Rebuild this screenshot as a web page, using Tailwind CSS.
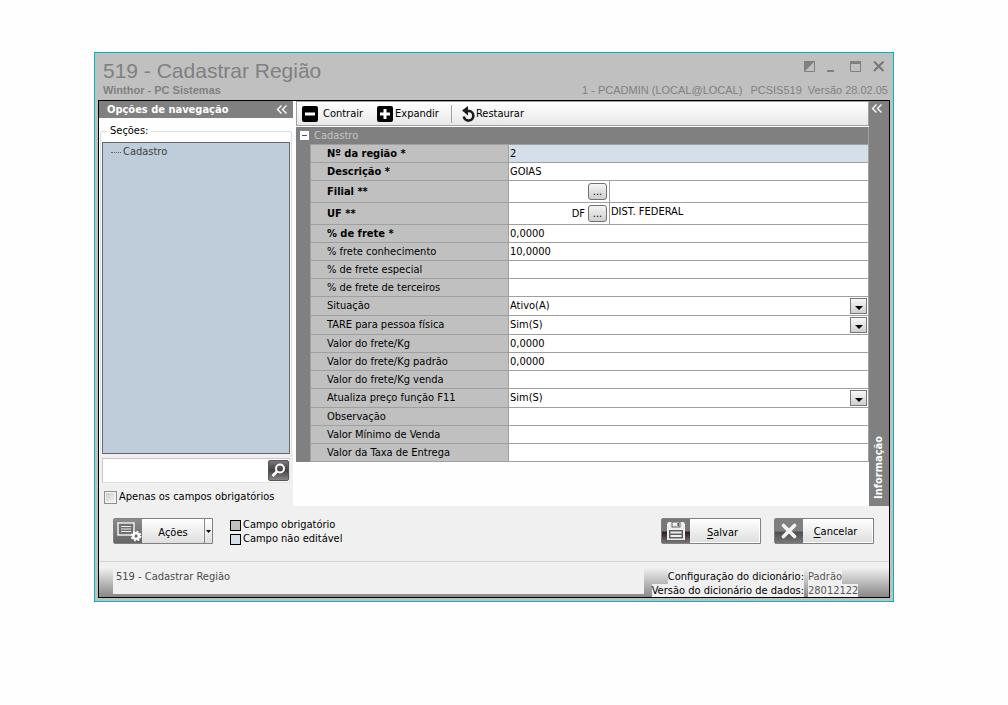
<!DOCTYPE html>
<html lang="pt-BR">
<head>
<meta charset="utf-8">
<title>519 - Cadastrar Região</title>
<script src="https://cdn.jsdelivr.net/npm/@tailwindcss/browser@4"></script>
</head>
<body class="flex min-h-screen flex-col bg-[#fefefe] pt-[52px] pr-[114px] pb-[103px] pl-[94px] font-['DejaVu_Sans_Condensed','Noto_Sans',sans-serif] text-[11px] leading-[14px] text-black">
<div class="flex grow flex-col border border-[#00b4c4] bg-[#c0c0c0] pr-[3px] pb-[3px] pl-[3px]">
  <header class="flex h-[47px] justify-between pl-[5px] font-['Liberation_Sans',sans-serif] text-[#808080]">
    <div class="flex flex-col pt-[6px]">
      <h1 class="text-[21px] leading-6">519 - Cadastrar Região</h1>
      <p class="text-[11px] leading-[14px] font-bold">Winthor - PC Sistemas</p>
    </div>
    <div class="flex flex-col items-end justify-between pt-[7px] pr-[2px] pb-[3px]">
      <div class="flex gap-[11px] pr-[3px]">
        <button aria-label="Alternar" class="h-3 w-3"><svg viewBox="0 0 12 12" class="h-3 w-3"><path d="M.5 1.500h10v10H.5z" fill="none" stroke="#808080"/><path d="M0 1h11L0 12z" fill="#808080"/></svg></button>
        <button aria-label="Minimizar" class="h-3 w-3"><svg viewBox="0 0 12 12" class="h-3 w-3"><path d="M0 10h7v2H0z" fill="#808080"/></svg></button>
        <button aria-label="Maximizar" class="h-3 w-3"><svg viewBox="0 0 12 12" class="h-3 w-3"><path d="M.5 1.500h10v10H.5z" fill="none" stroke="#808080"/><path d="M0 1h11v3H0z" fill="#808080"/></svg></button>
        <button aria-label="Fechar" class="h-3 w-3"><svg viewBox="0 0 12 12" class="h-3 w-3"><path d="M1 1.500l9.500 9.500M10.500 1.500L1 11" stroke="#777" stroke-width="2"/></svg></button>
      </div>
      <p class="flex gap-2 text-[11px] leading-[14px]"><span>1 - PCADMIN (LOCAL@LOCAL)</span><span>PCSIS519&nbsp; Versão 28.02.05</span></p>
    </div>
  </header>

  <div class="flex grow flex-col border border-black bg-[#f0f0f0]">
    <main class="flex bg-[#fefefe]">
      <aside class="flex w-[194px] shrink-0 flex-col">
        <div class="flex h-[17px] items-center justify-between bg-[#808080] pr-[5px] pl-2 text-white">
          <h2 class="font-bold">Opções de navegação</h2>
          <button aria-label="Recolher navegação"><svg viewBox="0 0 12 10" class="h-[10px] w-3"><path d="M5.500.5L1.500 4.500l4 4M10.500.5l-4 4 4 4" fill="none" stroke="#fff" stroke-width="1.300"/></svg></button>
        </div>
        <div class="flex grow flex-col px-px pt-[6px]">
          <fieldset class="flex grow flex-col rounded-t-[3px] border border-b-0 border-[#d5dfe5] px-px pt-1">
            <legend class="ml-[5px] px-[3px]">Seções:</legend>
            <div class="min-h-[312px] grow border border-[#64686e] bg-[#bfcddb] pt-[2px] pl-2">
              <a href="#cadastro" class="flex items-center gap-[2px] text-[#404040]"><span class="w-[10px] border-t border-dotted border-[#606060]"></span>Cadastro</a>
            </div>
          </fieldset>
        </div>
        <div class="bg-[#f0f0f0] px-[3px] pt-1">
          <div class="flex h-[25px] items-center border border-[#e2e2e2] border-t-[#c8c8c8] border-l-[#c8c8c8] bg-white">
            <input aria-label="Pesquisar campo" class="h-full min-w-0 grow px-1 outline-none">
            <button aria-label="Pesquisar" class="h-[21px] w-[21px] rounded-[2px] border border-[#555] bg-linear-to-b from-[#777] via-[#4a4242] to-[#888] p-px"><svg viewBox="0 0 17 17" class="h-[17px] w-[17px]"><circle cx="10" cy="6.500" r="4" fill="none" stroke="#fff" stroke-width="2"/><path d="M7 9.500L2.500 14" stroke="#fff" stroke-width="2.600"/></svg></button>
          </div>
          <div class="flex h-[23px] items-center gap-[2px] pt-[7px] pb-[2px] pl-[2px]">
            <input id="obrig" type="checkbox" class="h-[13px] w-[13px] appearance-none border border-[#8e8f8f] bg-linear-to-br from-[#c8c8c8] to-[#fafafa] shadow-[inset_0_0_0_1px_#f4f4f4] checked:bg-[#555]">
            <label for="obrig" class="whitespace-nowrap">Apenas os campos obrigatórios</label>
          </div>
        </div>
      </aside>

      <section class="ml-[3px] min-w-0 grow">
        <div class="flex h-[25px] items-center border border-[#a0a0a0] bg-linear-to-b from-white to-[#e8e8e8] pt-px pl-[5px]">
          <button class="flex items-center gap-[5px]"><svg viewBox="0 0 16 16" class="h-4 w-4"><rect width="16" height="16" rx="2"/><path d="M3 6.500h10v3H3z" fill="#fff"/></svg>Contrair</button>
          <button class="ml-[14px] flex items-center gap-[2px]"><svg viewBox="0 0 16 16" class="h-4 w-4"><rect width="16" height="16" rx="2"/><path d="M3 6.500h3.500V3h3v3.500H13v3H9.500V13h-3V9.500H3z" fill="#fff"/></svg>Expandir</button>
          <span class="mr-[9px] ml-3 h-[18px] border-l border-[#a0a0a0]"></span>
          <button class="flex items-center"><svg viewBox="0 0 15 16" class="h-4 w-[15px]"><path d="M5.500 5h2.500a4.800 4.800 0 1 1-5.200 5.500" fill="none" stroke="#1c1c1c" stroke-width="2.600"/><path d="M7 0v9.500L1 4.500z" fill="#1c1c1c"/></svg>Restaurar</button>
        </div>

        <div class="mt-px border-r border-[#a0a0a0] bg-[#808080]">
          <h2 id="cadastro" class="flex h-[17px] items-center gap-[5px] pl-1 text-[#c4c4c4]"><button aria-label="Recolher Cadastro" class="h-[9px] w-[9px] border border-white bg-white"><span class="mx-auto block w-[5px] border-t border-[#235a9a]"></span></button>Cadastro</h2>
          <div class="pl-[14px]">
            <table class="w-full table-fixed border-collapse [&_input]:block [&_input]:w-full [&_input]:bg-transparent [&_input]:outline-none [&_select]:w-full [&_select]:appearance-none [&_select]:outline-none [&_td]:border-t [&_td]:border-l [&_td]:border-[#a0a0a0] [&_td]:bg-white [&_td]:p-0 [&_td]:pl-px [&_th]:border-t [&_th]:border-l [&_th]:border-[#a0a0a0] [&_th]:bg-[#c0c0c0] [&_th]:p-0 [&_th]:pl-4 [&_th]:text-left">
              <colgroup><col class="w-[198px]"><col></colgroup>
              <tbody class="border-b border-[#a0a0a0]">
                <tr class="h-[18px]"><th><label for="f1">Nº da região *</label></th><td class="!bg-[#d5dfea]"><input id="f1" value="2" readonly></td></tr>
                <tr class="h-[18px]"><th><label for="f2">Descrição *</label></th><td><input id="f2" value="GOIAS"></td></tr>
                <tr class="h-[22px]"><th><label for="f3">Filial **</label></th><td>
                  <div class="flex h-[21px] items-center"><div class="w-[77px] pr-[2px]"><input id="f3"></div><button aria-label="Procurar filial" class="ml-px flex h-[17px] w-[19px] shrink-0 items-end justify-center rounded-[3px] border border-[#707070] bg-linear-to-b from-[#f4f4f4] to-[#cfcfcf] leading-[14px]">...</button><div class="ml-[2px] h-full grow border-l border-[#a0a0a0]"></div></div></td></tr>
                <tr class="h-[22px]"><th><label for="f4">UF **</label></th><td>
                  <div class="flex h-[21px] items-center"><div class="w-[77px] pr-[2px]"><input id="f4" value="DF" class="text-right"></div><button aria-label="Procurar UF" class="ml-px flex h-[17px] w-[19px] shrink-0 items-end justify-center rounded-[3px] border border-[#707070] bg-linear-to-b from-[#f4f4f4] to-[#cfcfcf] leading-[14px]">...</button><div class="ml-[2px] h-full grow border-l border-[#a0a0a0] pt-[2px] pl-px">DIST. FEDERAL</div></div></td></tr>
                <tr class="h-[18px]"><th><label for="f5">% de frete *</label></th><td><input id="f5" value="0,0000"></td></tr>
                <tr class="h-[18px]"><th class="font-normal"><label for="f6">% frete conhecimento</label></th><td><input id="f6" value="10,0000"></td></tr>
                <tr class="h-[18px]"><th class="font-normal"><label for="f7">% de frete especial</label></th><td><input id="f7"></td></tr>
                <tr class="h-[18px]"><th class="font-normal"><label for="f8">% de frete de terceiros</label></th><td><input id="f8"></td></tr>
                <tr class="h-[19px]"><th class="font-normal"><label for="f9">Situação</label></th><td><div class="relative"><select id="f9"><option>Ativo(A)</option></select><span class="pointer-events-none absolute inset-y-[-1px] right-px flex w-[17px] items-center justify-center border border-[#777] bg-linear-to-b from-[#f8f8f8] to-[#cfcfcf]"><svg viewBox="0 0 8 4" class="mt-[3px] h-1 w-2"><path d="M0 0h8L4 4z"/></svg></span></div></td></tr>
                <tr class="h-[19px]"><th class="font-normal"><label for="f10">TARE para pessoa física</label></th><td><div class="relative"><select id="f10"><option>Sim(S)</option></select><span class="pointer-events-none absolute inset-y-[-1px] right-px flex w-[17px] items-center justify-center border border-[#777] bg-linear-to-b from-[#f8f8f8] to-[#cfcfcf]"><svg viewBox="0 0 8 4" class="mt-[3px] h-1 w-2"><path d="M0 0h8L4 4z"/></svg></span></div></td></tr>
                <tr class="h-[18px]"><th class="font-normal"><label for="f11">Valor do frete/Kg</label></th><td><input id="f11" value="0,0000"></td></tr>
                <tr class="h-[18px]"><th class="font-normal"><label for="f12">Valor do frete/Kg padrão</label></th><td><input id="f12" value="0,0000"></td></tr>
                <tr class="h-[18px]"><th class="font-normal"><label for="f13">Valor do frete/Kg venda</label></th><td><input id="f13"></td></tr>
                <tr class="h-[19px]"><th class="font-normal"><label for="f14">Atualiza preço função F11</label></th><td><div class="relative"><select id="f14"><option>Sim(S)</option></select><span class="pointer-events-none absolute inset-y-[-1px] right-px flex w-[17px] items-center justify-center border border-[#777] bg-linear-to-b from-[#f8f8f8] to-[#cfcfcf]"><svg viewBox="0 0 8 4" class="mt-[3px] h-1 w-2"><path d="M0 0h8L4 4z"/></svg></span></div></td></tr>
                <tr class="h-[18px]"><th class="font-normal"><label for="f15">Observação</label></th><td><input id="f15"></td></tr>
                <tr class="h-[18px]"><th class="font-normal"><label for="f16">Valor Mínimo de Venda</label></th><td><input id="f16"></td></tr>
                <tr class="h-[18px]"><th class="font-normal"><label for="f17">Valor da Taxa de Entrega</label></th><td><input id="f17"></td></tr>
              </tbody>
            </table>
          </div>
        </div>
      </section>

      <aside class="flex w-[20px] shrink-0 flex-col items-center justify-between bg-[#808080] pt-[3px] pb-[7px] text-white">
        <button aria-label="Expandir informação" class="mr-1"><svg viewBox="0 0 12 10" class="h-[10px] w-3"><path d="M5.500.5L1.500 4.500l4 4M10.500.5l-4 4 4 4" fill="none" stroke="#fff" stroke-width="1.300"/></svg></button>
        <span class="rotate-180 font-bold [writing-mode:vertical-rl]">Informação</span>
      </aside>
    </main>

    <footer class="flex grow flex-col">
      <div class="flex grow items-start pt-[12px] pr-[15px] pl-[14px]">
        <button class="flex h-[26px] w-[100px] items-stretch rounded-l-[2px] border border-[#808080] bg-linear-to-b from-white to-[#dedede]">
          <span class="flex w-7 items-center justify-center bg-linear-to-b from-[#8c8c8c] to-[#666]"><svg viewBox="0 0 28 24" class="h-6 w-7"><path d="M4 4h16v12H4z" fill="#707070" stroke="#eee" stroke-width="1.500"/><path d="M7 7.500h10M7 10h10M7 12.500h10" stroke="#eee"/><circle cx="22" cy="17" r="2.900" fill="none" stroke="#fff" stroke-width="2.400"/><circle cx="22" cy="17" r="4.600" fill="none" stroke="#fff" stroke-width="1.600" stroke-dasharray="1.900 1.710"/></svg></span>
          <span class="flex grow items-center justify-center border-2 border-transparent pt-[3px]">Ações</span>
          <span class="flex w-2 items-center justify-center border-l border-[#888]"><svg viewBox="0 0 5 3" class="h-[3px] w-[5px]"><path d="M0 0h5L2.500 3z"/></svg></span>
        </button>
        <ul class="ml-[17px] grow">
          <li class="flex items-center gap-[2px]"><span class="h-[11px] w-[11px] border border-black bg-[#c0c0c0]"></span>Campo obrigatório</li>
          <li class="flex items-center gap-[2px]"><span class="h-[11px] w-[11px] border border-black bg-[#d5dfea]"></span>Campo não editável</li>
        </ul>
        <button class="flex h-[26px] w-[100px] items-stretch rounded-l-[2px] border border-[#808080] bg-linear-to-b from-white to-[#dedede] shadow-[inset_-1px_-1px_0_#fff]">
          <span class="flex w-7 items-center justify-center bg-linear-to-b from-[#777] from-50% via-[#301c1c] via-55% to-[#777]"><svg viewBox="0 0 20 20" class="h-5 w-5"><path d="M1 2.500L2.500 1h15L19 2.500V19H1z" fill="#ececec"/><path d="M5.500 1h9v5.500h-9zM3 9h14v8.500H3z" fill="#606060"/><path d="M6.500 1.500h7v4h-7zM4.500 10.500h11v2h-11zM4.500 14h11v2h-11z" fill="#eee"/><path d="M11.500 2h1.500v3h-1.500z" fill="#555"/></svg></span>
          <span class="flex grow items-center justify-center pt-[3px] pr-[5px]"><u class="underline-offset-2">S</u>alvar</span>
        </button>
        <button class="ml-[13px] flex h-[26px] w-[100px] items-stretch rounded-l-[2px] border border-[#808080] bg-linear-to-b from-white to-[#dedede] shadow-[inset_-1px_-1px_0_#fff]">
          <span class="flex w-7 items-center justify-center bg-linear-to-b from-[#808080] from-50% via-[#505050] via-55% to-[#777]"><svg viewBox="0 0 16 16" class="h-4 w-4"><path d="M2.500 2.500l11 11M13.500 2.500l-11 11" stroke="#f4f4f4" stroke-width="3.600" stroke-linecap="round"/></svg></span>
          <span class="flex grow items-center justify-center pt-px pr-[5px]"><u class="underline-offset-2">C</u>ancelar</span>
        </button>
      </div>
      <hr class="border-[#d4d4d4]">
      <div class="mt-[5px] flex h-[30px] bg-linear-to-b from-[#f4f4f4] to-[#888] pl-[14px]">
        <p class="mb-[3px] grow bg-[#f0f0f0] pt-[3px] pl-[3px] text-[#4a4a4a]">519 - Cadastrar Região</p>
        <dl class="grid w-[245px] shrink-0 grid-cols-[160px_auto] content-start gap-x-1 pt-[3px] leading-[14px]">
          <dt class="justify-self-end bg-[#f0f0f0] whitespace-nowrap">Configuração do dicionário:</dt><dd class="justify-self-start bg-[#f0f0f0] text-[#555]">Padrão</dd>
          <dt class="justify-self-end bg-[#f0f0f0] leading-[13px] whitespace-nowrap">Versão do dicionário de dados:</dt><dd class="justify-self-start bg-[#f0f0f0] leading-[13px] text-[#555]">28012122</dd>
        </dl>
      </div>
    </footer>
  </div>
</div>
</body>
</html>
